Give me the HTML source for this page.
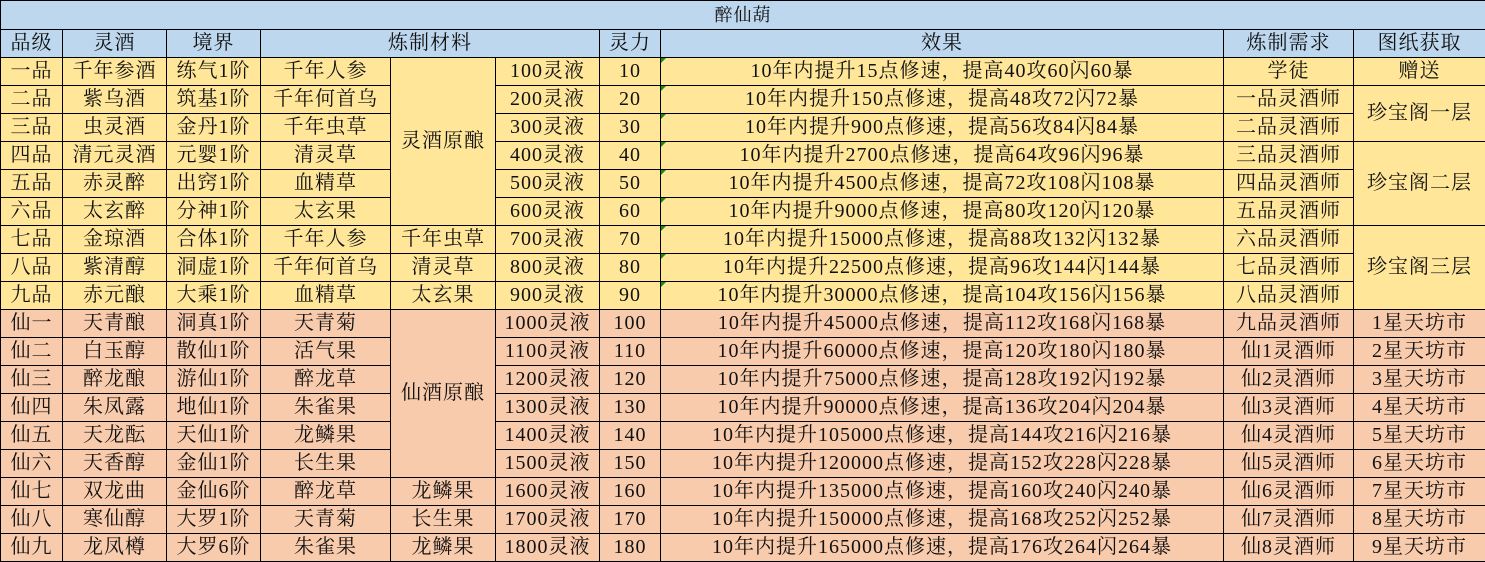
<!DOCTYPE html>
<html><head><meta charset="utf-8"><style>
body{margin:0;background:#fff;}
table{border-collapse:collapse;table-layout:fixed;width:1485px;font-family:"Liberation Serif","Noto Serif CJK SC",serif;font-size:20px;color:#111;letter-spacing:1px;}
td{border:1px solid #000;text-align:center;padding:0;height:27px;line-height:27px;white-space:nowrap;overflow:hidden;position:relative;}
.t td{background:#bdd7ee;font-size:18px;height:28px;}
.h td{background:#bdd7ee;}
.y td{background:#ffe699;}
.p td{background:#f8cbad;}
.g::before{content:"";position:absolute;left:0;top:0;border-top:5px solid #1a8a1a;border-right:5px solid transparent;}
</style></head><body>
<table>
<colgroup><col style="width:62px"><col style="width:104px"><col style="width:94px"><col style="width:130px"><col style="width:105px"><col style="width:104px"><col style="width:61px"><col style="width:563px"><col style="width:130px"><col style="width:132px"></colgroup>
<tr class="t"><td colspan="10">醉仙葫</td></tr>
<tr class="h"><td>品级</td><td>灵酒</td><td>境界</td><td colspan="3">炼制材料</td><td>灵力</td><td>效果</td><td>炼制需求</td><td>图纸获取</td></tr>
<tr class="y"><td>一品</td><td>千年参酒</td><td>练气1阶</td><td>千年人参</td><td rowspan="6">灵酒原酿</td><td>100灵液</td><td>10</td><td class="g">10年内提升15点修速，提高40攻60闪60暴</td><td>学徒</td><td>赠送</td></tr>
<tr class="y"><td>二品</td><td>紫乌酒</td><td>筑基1阶</td><td>千年何首乌</td><td>200灵液</td><td>20</td><td class="g">10年内提升150点修速，提高48攻72闪72暴</td><td>一品灵酒师</td><td rowspan="2">珍宝阁一层</td></tr>
<tr class="y"><td>三品</td><td>虫灵酒</td><td>金丹1阶</td><td>千年虫草</td><td>300灵液</td><td>30</td><td class="g">10年内提升900点修速，提高56攻84闪84暴</td><td>二品灵酒师</td></tr>
<tr class="y"><td>四品</td><td>清元灵酒</td><td>元婴1阶</td><td>清灵草</td><td>400灵液</td><td>40</td><td class="g">10年内提升2700点修速，提高64攻96闪96暴</td><td>三品灵酒师</td><td rowspan="3">珍宝阁二层</td></tr>
<tr class="y"><td>五品</td><td>赤灵醉</td><td>出窍1阶</td><td>血精草</td><td>500灵液</td><td>50</td><td class="g">10年内提升4500点修速，提高72攻108闪108暴</td><td>四品灵酒师</td></tr>
<tr class="y"><td>六品</td><td>太玄醉</td><td>分神1阶</td><td>太玄果</td><td>600灵液</td><td>60</td><td class="g">10年内提升9000点修速，提高80攻120闪120暴</td><td>五品灵酒师</td></tr>
<tr class="y"><td>七品</td><td>金琼酒</td><td>合体1阶</td><td>千年人参</td><td>千年虫草</td><td>700灵液</td><td>70</td><td class="g">10年内提升15000点修速，提高88攻132闪132暴</td><td>六品灵酒师</td><td rowspan="3">珍宝阁三层</td></tr>
<tr class="y"><td>八品</td><td>紫清醇</td><td>洞虚1阶</td><td>千年何首乌</td><td>清灵草</td><td>800灵液</td><td>80</td><td class="g">10年内提升22500点修速，提高96攻144闪144暴</td><td>七品灵酒师</td></tr>
<tr class="y"><td>九品</td><td>赤元酿</td><td>大乘1阶</td><td>血精草</td><td>太玄果</td><td>900灵液</td><td>90</td><td class="g">10年内提升30000点修速，提高104攻156闪156暴</td><td>八品灵酒师</td></tr>
<tr class="p"><td>仙一</td><td>天青酿</td><td>洞真1阶</td><td>天青菊</td><td rowspan="6">仙酒原酿</td><td>1000灵液</td><td>100</td><td>10年内提升45000点修速，提高112攻168闪168暴</td><td>九品灵酒师</td><td>1星天坊市</td></tr>
<tr class="p"><td>仙二</td><td>白玉醇</td><td>散仙1阶</td><td>活气果</td><td>1100灵液</td><td>110</td><td>10年内提升60000点修速，提高120攻180闪180暴</td><td>仙1灵酒师</td><td>2星天坊市</td></tr>
<tr class="p"><td>仙三</td><td>醉龙酿</td><td>游仙1阶</td><td>醉龙草</td><td>1200灵液</td><td>120</td><td>10年内提升75000点修速，提高128攻192闪192暴</td><td>仙2灵酒师</td><td>3星天坊市</td></tr>
<tr class="p"><td>仙四</td><td>朱凤露</td><td>地仙1阶</td><td>朱雀果</td><td>1300灵液</td><td>130</td><td>10年内提升90000点修速，提高136攻204闪204暴</td><td>仙3灵酒师</td><td>4星天坊市</td></tr>
<tr class="p"><td>仙五</td><td>天龙酝</td><td>天仙1阶</td><td>龙鳞果</td><td>1400灵液</td><td>140</td><td>10年内提升105000点修速，提高144攻216闪216暴</td><td>仙4灵酒师</td><td>5星天坊市</td></tr>
<tr class="p"><td>仙六</td><td>天香醇</td><td>金仙1阶</td><td>长生果</td><td>1500灵液</td><td>150</td><td>10年内提升120000点修速，提高152攻228闪228暴</td><td>仙5灵酒师</td><td>6星天坊市</td></tr>
<tr class="p"><td>仙七</td><td>双龙曲</td><td>金仙6阶</td><td>醉龙草</td><td>龙鳞果</td><td>1600灵液</td><td>160</td><td>10年内提升135000点修速，提高160攻240闪240暴</td><td>仙6灵酒师</td><td>7星天坊市</td></tr>
<tr class="p"><td>仙八</td><td>寒仙醇</td><td>大罗1阶</td><td>天青菊</td><td>长生果</td><td>1700灵液</td><td>170</td><td>10年内提升150000点修速，提高168攻252闪252暴</td><td>仙7灵酒师</td><td>8星天坊市</td></tr>
<tr class="p"><td>仙九</td><td>龙凤樽</td><td>大罗6阶</td><td>朱雀果</td><td>龙鳞果</td><td>1800灵液</td><td>180</td><td>10年内提升165000点修速，提高176攻264闪264暴</td><td>仙8灵酒师</td><td>9星天坊市</td></tr>
</table>
</body></html>
